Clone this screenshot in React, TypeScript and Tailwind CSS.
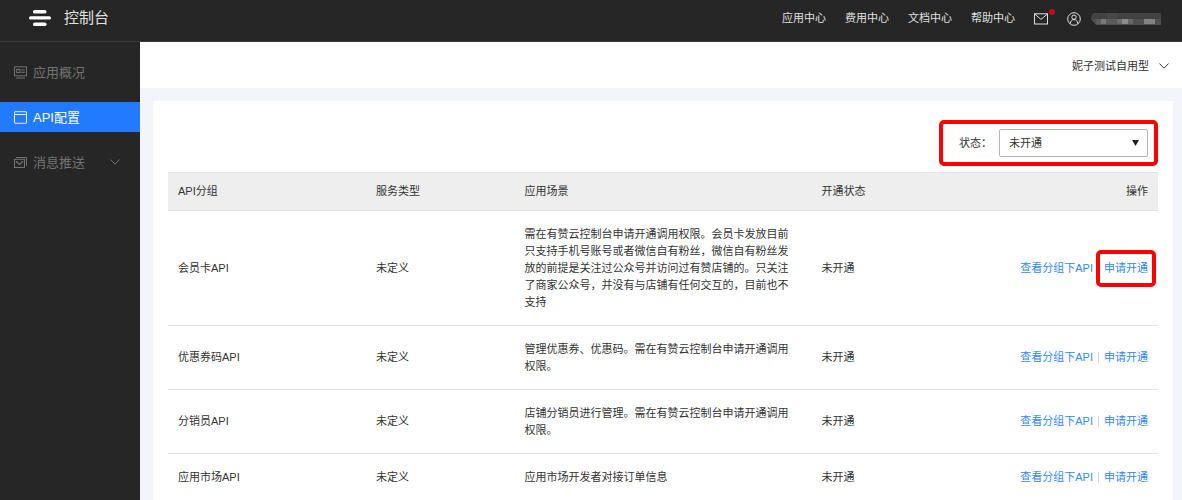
import React from 'react';

type Row = { name: string; scene: string; highlighted?: boolean };

const rows: Row[] = [
  {
    name: '会员卡API',
    scene:
      '需在有赞云控制台申请开通调用权限。会员卡发放目前只支持手机号账号或者微信自有粉丝，微信自有粉丝发放的前提是关注过公众号并访问过有赞店铺的。只关注了商家公众号，并没有与店铺有任何交互的，目前也不支持',
    highlighted: true,
  },
  { name: '优惠券码API', scene: '管理优惠券、优惠码。需在有赞云控制台申请开通调用权限。' },
  { name: '分销员API', scene: '店铺分销员进行管理。需在有赞云控制台申请开通调用权限。' },
  { name: '应用市场API', scene: '应用市场开发者对接订单信息' },
];

const navLinks = ['应用中心', '费用中心', '文档中心', '帮助中心'];

function Logo() {
  return (
    <svg width="22" height="16" viewBox="0 0 22 16" fill="#fff" aria-hidden="true">
      <rect x="4" y="0" width="13.5" height="3.6" rx="1.6" />
      <rect x="0" y="6.2" width="22" height="3.4" rx="1.6" />
      <rect x="4" y="12.4" width="13.5" height="3.6" rx="1.6" />
    </svg>
  );
}

function OverviewIcon() {
  return (
    <svg width="13" height="13" viewBox="0 0 13 13" fill="none" stroke="currentColor" aria-hidden="true">
      <rect x="0.5" y="0.8" width="12" height="9" />
      <rect x="2.7" y="3.5" width="3.2" height="3.2" />
      <path d="M7.2 4h3.600M7.200 6.300h3.600M2.200 12h8.600" />
    </svg>
  );
}

function WindowIcon() {
  return (
    <svg width="13" height="13" viewBox="0 0 13 13" fill="none" stroke="currentColor" strokeWidth="0.9" aria-hidden="true">
      <rect x="0.5" y="0.7" width="12" height="11.6" rx="0.5" />
      <path d="M0.5 3.5h12" />
    </svg>
  );
}

function MessageIcon() {
  return (
    <svg width="13" height="13" viewBox="0 0 13 13" fill="none" stroke="currentColor" aria-hidden="true">
      <rect x="0.5" y="3.3" width="10" height="8.2" />
      <path d="M2 5.200l3.500 3.200L9 5.200" strokeWidth="1.300" />
      <path d="M2 1.500h10.500v8.300" />
    </svg>
  );
}

function MailIcon() {
  return (
    <svg width="14" height="12" viewBox="0 0 14 12" fill="none" stroke="currentColor" aria-hidden="true">
      <rect x="0.5" y="0.8" width="13" height="10.2" />
      <path d="M1 1.300L7 6.400l6-5.100" />
    </svg>
  );
}

function UserIcon() {
  return (
    <svg width="14" height="14" viewBox="0 0 14 14" fill="none" stroke="currentColor" aria-hidden="true">
      <circle cx="7" cy="7" r="6.3" />
      <circle cx="7" cy="5.2" r="2.2" />
      <path d="M3.200 11.800C3.400 9.200 4.900 7.600 7 7.600s3.600 1.600 3.800 4.200" />
    </svg>
  );
}

function Chevron() {
  return (
    <svg width="10" height="6" viewBox="0 0 10 6" fill="none" stroke="currentColor" aria-hidden="true">
      <path d="M0.400 0.500L5 5.200 9.600 0.500" />
    </svg>
  );
}

function MaskedName() {
  return (
    <svg width="70" height="12" viewBox="0 0 70 12" aria-hidden="true">
      <path d="M3 0h67v6H0V3z" fill="#424242" />
      <rect x="16" y="0" width="10" height="6" fill="#484848" />
      <path d="M0 6h70v6H5z" fill="#505050" />
      <rect x="5" y="6" width="5" height="5" fill="#5c5c5c" />
      <rect x="10" y="6" width="5" height="5" fill="#7a7a7a" />
      <rect x="15" y="6" width="11" height="5" fill="#5c5c5c" />
      <rect x="26" y="6" width="5" height="5" fill="#6c6c6c" />
      <rect x="31" y="6" width="6" height="5" fill="#8c8c8c" />
      <rect x="37" y="6" width="5" height="5" fill="#666" />
      <rect x="53" y="6" width="11" height="5" fill="#828282" />
    </svg>
  );
}

export default function App() {
  return (
    <div className="flex h-screen flex-col overflow-hidden bg-[#f4f5fa] font-['Liberation_Sans','Noto_Sans_CJK_SC',sans-serif] text-[11px] leading-[17px] text-[#333]">
      <header className="flex h-[42px] shrink-0 items-center justify-between border-b border-[#3c3c3c] bg-[#262626] pr-[21px] pb-[6px] pl-[29px] text-[#e0e0e0]">
        <div className="flex items-center gap-[13px]">
          <Logo />
          <h1 className="text-[15px] leading-[20px]">控制台</h1>
        </div>
        <nav className="flex items-center gap-[19px] pt-[2px]">
          {navLinks.map((label) => (
            <a key={label} href="#">
              {label}
            </a>
          ))}
          <a href="#" aria-label="消息" className="relative">
            <MailIcon />
            <span className="absolute -top-[4px] -right-[7px] size-[6px] rounded-full bg-[#d0021b]" />
          </a>
          <a href="#" aria-label="账号" className="flex items-center gap-[10px]">
            <UserIcon />
            <MaskedName />
          </a>
        </nav>
      </header>

      <div className="flex min-h-0 flex-1">
        <aside className="w-[140px] shrink-0 bg-[#262626] pt-[15px]">
          <nav className="flex flex-col gap-[15px] text-[13px] text-[#737373]">
            <a href="#" className="flex h-[30px] items-center gap-[6px] px-[14px]">
              <OverviewIcon />
              应用概况
            </a>
            <a href="#" className="flex h-[30px] items-center gap-[6px] bg-[#217aff] px-[14px] text-white">
              <WindowIcon />
              API配置
            </a>
            <a href="#" className="flex h-[30px] items-center gap-[6px] pr-[20px] pl-[14px]">
              <MessageIcon />
              <span className="flex-1">消息推送</span>
              <Chevron />
            </a>
          </nav>
        </aside>

        <main className="min-w-0 flex-1">
          <div className="flex h-[46px] items-center justify-end bg-white pr-[13px]">
            <button type="button" className="flex items-center gap-[10px] pt-[2px]">
              妮子测试自用型
              <Chevron />
            </button>
          </div>

          <section className="mt-[13px] mr-[9px] ml-[13px] min-h-full bg-white px-[15px] pt-[19px]">
            <div className="flex justify-end pb-[6px]">
              <div className="flex h-[46px] items-center gap-[7px] rounded-[5px] border-4 border-[#ff0000] pr-[6px] pl-[16px]">
                <label htmlFor="status">状态：</label>
                <div className="relative">
                  <select
                    id="status"
                    className="h-[28px] w-[149px] appearance-none rounded-[2px] border border-[#b5b5b5] bg-white pl-[9px] text-[#333]"
                  >
                    <option>未开通</option>
                    <option>已开通</option>
                  </select>
                  <svg
                    className="pointer-events-none absolute top-[11px] right-[9px]"
                    width="7"
                    height="6"
                    viewBox="0 0 7 6"
                    aria-hidden="true"
                  >
                    <path d="M0 0h7L3.500 6z" fill="#222" />
                  </svg>
                </div>
              </div>
            </div>

            <table className="w-full table-fixed border-collapse text-left">
              <colgroup>
                <col className="w-[20%]" />
                <col className="w-[15%]" />
                <col className="w-[30%]" />
                <col className="w-[15%]" />
                <col className="w-[20%]" />
              </colgroup>
              <thead>
                <tr className="h-[38px] border-y border-[#e2e2e2] bg-[#eee]">
                  <th className="px-[10px] font-normal">API分组</th>
                  <th className="px-[10px] font-normal">服务类型</th>
                  <th className="px-[10px] font-normal">应用场景</th>
                  <th className="px-[10px] font-normal">开通状态</th>
                  <th className="px-[10px] text-right font-normal">操作</th>
                </tr>
              </thead>
              <tbody>
                {rows.map((row) => (
                  <tr key={row.name} className="border-b border-[#e2e2e2]">
                    <td className="px-[10px]">{row.name}</td>
                    <td className="px-[10px]">未定义</td>
                    <td className="pt-[15px] pr-[20px] pb-[14px] pl-[10px]">{row.scene}</td>
                    <td className="px-[10px]">未开通</td>
                    <td className="px-[10px] text-[#3388ff]">
                      <div className="flex items-center justify-end gap-[5px]">
                        <a href="#">查看分组下API</a>
                        <span className="h-[11px] w-px bg-[#d9d9d9]" />
                        <a href="#" className="relative">
                          申请开通
                          {row.highlighted && (
                            <span className="absolute -inset-x-[8px] -inset-y-[10px] rounded-[5px] border-4 border-[#ff0000]" />
                          )}
                        </a>
                      </div>
                    </td>
                  </tr>
                ))}
              </tbody>
            </table>
          </section>
        </main>
      </div>
    </div>
  );
}
